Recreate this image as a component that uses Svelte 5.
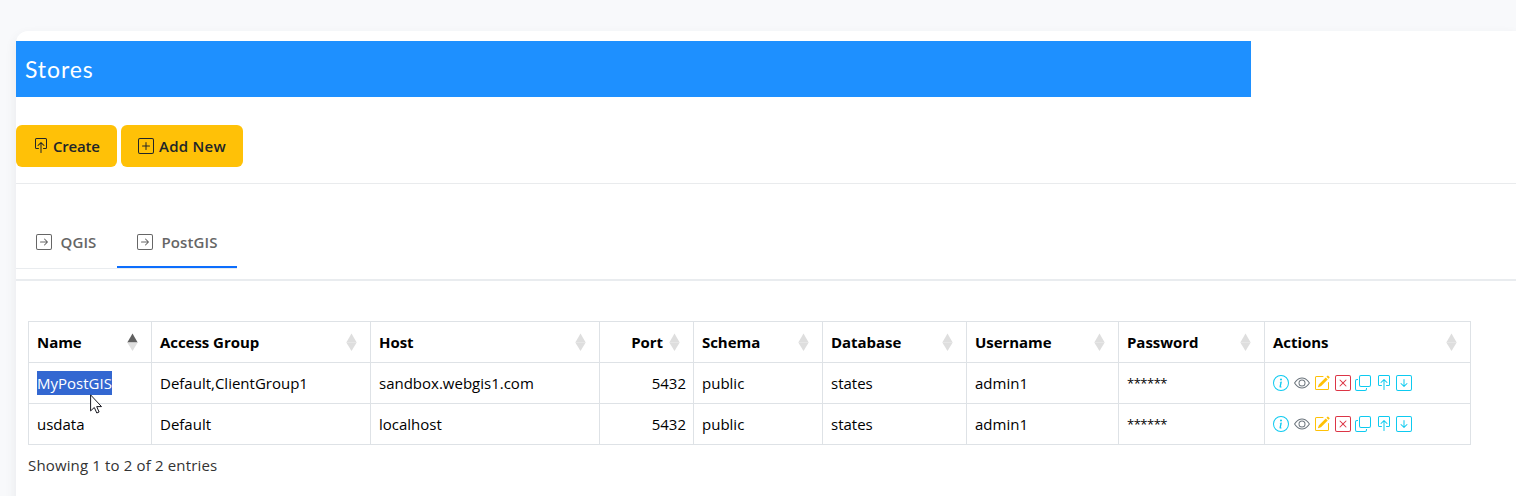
<script>
  const icons = {
    upload: [
      'M3.5 10a.5.5 0 0 1-.5-.5v-8a.5.5 0 0 1 .5-.5h9a.5.5 0 0 1 .5.5v8a.5.5 0 0 1-.5.5h-2a.5.5 0 0 0 0 1h2A1.5 1.5 0 0 0 14 9.5v-8A1.5 1.5 0 0 0 12.5 0h-9A1.5 1.5 0 0 0 2 1.5v8A1.5 1.5 0 0 0 3.5 11h2a.5.5 0 0 0 0-1z',
      'M7.646 4.146a.5.5 0 0 1 .708 0l3 3a.5.5 0 0 1-.708.708L8.5 5.707V14.5a.5.5 0 0 1-1 0V5.707L5.354 7.854a.5.5 0 1 1-.708-.708z'
    ],
    plus: [
      'M14 1a1 1 0 0 1 1 1v12a1 1 0 0 1-1 1H2a1 1 0 0 1-1-1V2a1 1 0 0 1 1-1zM2 0a2 2 0 0 0-2 2v12a2 2 0 0 0 2 2h12a2 2 0 0 0 2-2V2a2 2 0 0 0-2-2z',
      'M8 4a.5.5 0 0 1 .5.5v3h3a.5.5 0 0 1 0 1h-3v3a.5.5 0 0 1-1 0v-3h-3a.5.5 0 0 1 0-1h3v-3A.5.5 0 0 1 8 4'
    ],
    right: [
      'M15 2a1 1 0 0 0-1-1H2a1 1 0 0 0-1 1v12a1 1 0 0 0 1 1h12a1 1 0 0 0 1-1zM0 2a2 2 0 0 1 2-2h12a2 2 0 0 1 2 2v12a2 2 0 0 1-2 2H2a2 2 0 0 1-2-2zm4.5 5.5a.5.5 0 0 0 0 1h5.793l-2.147 2.146a.5.5 0 0 0 .708.708l3-3a.5.5 0 0 0 0-.708l-3-3a.5.5 0 1 0-.708.708L10.293 7.5z'
    ],
    info: [
      'M8 15A7 7 0 1 1 8 1a7 7 0 0 1 0 14m0 1A8 8 0 1 0 8 0a8 8 0 0 0 0 16',
      'm8.93 6.588-2.29.287-.082.38.45.083c.294.07.352.176.288.469l-.738 3.468c-.194.897.105 1.319.808 1.319.545 0 1.178-.252 1.465-.598l.088-.416c-.2.176-.492.246-.686.246-.275 0-.375-.193-.304-.533zM9 4.5a1 1 0 1 1-2 0 1 1 0 0 1 2 0'
    ],
    eye: [
      'M16 8s-3-5.5-8-5.5S0 8 0 8s3 5.5 8 5.5S16 8 16 8M1.173 8a13 13 0 0 1 1.66-2.043C4.12 4.668 5.88 3.5 8 3.5s3.879 1.168 5.168 2.457A13 13 0 0 1 14.828 8q-.086.13-.195.288c-.335.48-.83 1.12-1.465 1.755C11.879 11.332 10.119 12.5 8 12.5s-3.879-1.168-5.168-2.457A13 13 0 0 1 1.172 8z',
      'M8 5.5a2.5 2.5 0 1 0 0 5 2.5 2.5 0 0 0 0-5M4.5 8a3.5 3.5 0 1 1 7 0 3.5 3.5 0 0 1-7 0'
    ],
    edit: [
      'M15.502 1.94a.5.5 0 0 1 0 .706L14.459 3.69l-2-2L13.502.646a.5.5 0 0 1 .707 0l1.293 1.293zm-1.75 2.456-2-2L4.939 9.21a.5.5 0 0 0-.121.196l-.805 2.414a.25.25 0 0 0 .316.316l2.414-.805a.5.5 0 0 0 .196-.12l6.813-6.814z',
      'M1 13.5A1.5 1.5 0 0 0 2.5 15h11a1.5 1.5 0 0 0 1.5-1.5v-6a.5.5 0 0 0-1 0v6a.5.5 0 0 1-.5.5h-11a.5.5 0 0 1-.5-.5v-11a.5.5 0 0 1 .5-.5H9a.5.5 0 0 0 0-1H2.5A1.5 1.5 0 0 0 1 2.5z'
    ],
    remove: [
      'M14 1a1 1 0 0 1 1 1v12a1 1 0 0 1-1 1H2a1 1 0 0 1-1-1V2a1 1 0 0 1 1-1zM2 0a2 2 0 0 0-2 2v12a2 2 0 0 0 2 2h12a2 2 0 0 0 2-2V2a2 2 0 0 0-2-2z',
      'M4.646 4.646a.5.5 0 0 1 .708 0L8 7.293l2.646-2.647a.5.5 0 0 1 .708.708L8.707 8l2.647 2.646a.5.5 0 0 1-.708.708L8 8.707l-2.646 2.647a.5.5 0 0 1-.708-.708L7.293 8 4.646 5.354a.5.5 0 0 1 0-.708'
    ],
    copy: [
      'M4 2a2 2 0 0 1 2-2h8a2 2 0 0 1 2 2v8a2 2 0 0 1-2 2H6a2 2 0 0 1-2-2zm2-1a1 1 0 0 0-1 1v8a1 1 0 0 0 1 1h8a1 1 0 0 0 1-1V2a1 1 0 0 0-1-1zM2 5a1 1 0 0 0-1 1v8a1 1 0 0 0 1 1h8a1 1 0 0 0 1-1v-1h1v1a2 2 0 0 1-2 2H2a2 2 0 0 1-2-2V6a2 2 0 0 1 2-2h1v1z'
    ],
    down: [
      'M15 2a1 1 0 0 0-1-1H2a1 1 0 0 0-1 1v12a1 1 0 0 0 1 1h12a1 1 0 0 0 1-1zM0 2a2 2 0 0 1 2-2h12a2 2 0 0 1 2 2v12a2 2 0 0 1-2 2H2a2 2 0 0 1-2-2zm8.5 2.5a.5.5 0 0 0-1 0v5.793L5.354 8.146a.5.5 0 1 0-.708.708l3 3a.5.5 0 0 0 .708 0l3-3a.5.5 0 0 0-.708-.708L8.5 10.293z'
    ]
  };

  const columns = [
    { label: 'Name', width: 123, sorted: true },
    { label: 'Access Group', width: 219 },
    { label: 'Host', width: 229 },
    { label: 'Port', width: 94, numeric: true },
    { label: 'Schema', width: 129 },
    { label: 'Database', width: 144 },
    { label: 'Username', width: 152 },
    { label: 'Password', width: 146 },
    { label: 'Actions', width: 206 }
  ];

  const rows = [
    { cells: ['MyPostGIS', 'Default,ClientGroup1', 'sandbox.webgis1.com', '5432', 'public', 'states', 'admin1', '******'], selected: true },
    { cells: ['usdata', 'Default', 'localhost', '5432', 'public', 'states', 'admin1', '******'] }
  ];

  const actions = [
    ['info', 'cyan'],
    ['eye', 'gray'],
    ['edit', 'amber'],
    ['remove', 'red'],
    ['copy', 'cyan'],
    ['upload', 'cyan'],
    ['down', 'cyan']
  ];
</script>

{#snippet icon(name, tone = '')}
  <svg class="icon {tone}" viewBox="0 0 16 16" aria-hidden="true">
    {#each icons[name] as d}<path {d} />{/each}
  </svg>
{/snippet}

<main class="card">
  <header class="banner"><h1>Stores</h1></header>

  <div class="toolbar">
    <button class="btn">{@render icon('upload')}<span>Create</span></button>
    <button class="btn add">{@render icon('plus')}<span>Add New</span></button>
  </div>

  <div class="tabwrap">
    <nav class="tabs">
      <a class="tab" href="#qgis">{@render icon('right')}<span>QGIS</span></a>
      <a class="tab active" href="#postgis">{@render icon('right')}<span>PostGIS</span></a>
    </nav>
  </div>

  <section class="stores">
    <table>
      <colgroup>
        {#each columns as c}<col style="width:{c.width}px" />{/each}
      </colgroup>
      <thead>
        <tr>
          {#each columns as c}
            <th class:numeric={c.numeric}>
              <div class="head">
                <span>{c.label}</span>
                <svg class="sort" class:sorted={c.sorted} viewBox="0 0 11 18" aria-hidden="true">
                  <path class="up" d="M5.5 .5 10.7 9.5H.3z" />
                  <path class="dn" d="M.3 9.5h10.4L5.5 18z" />
                </svg>
              </div>
            </th>
          {/each}
        </tr>
      </thead>
      <tbody>
        {#each rows as r}
          <tr>
            {#each r.cells as cell, i}
              <td class:numeric={columns[i].numeric} class:stars={i === 7}>
                {#if r.selected && i === 0}
                  <span class="selection">{cell}<svg class="pointer" viewBox="0 0 12 20" aria-hidden="true"><path d="M.6 .9v16l3.7-3.4 2.5 5.5 2.3-1-2.4-5.4h4.8z" /></svg></span>
                {:else}<span>{cell}</span>{/if}
              </td>
            {/each}
            <td><div class="actions">{#each actions as [name, tone]}{@render icon(name, tone)}{/each}</div></td>
          </tr>
        {/each}
      </tbody>
    </table>
    <p class="summary">Showing 1 to 2 of 2 entries</p>
  </section>
</main>

<style>
  :global(html) { overflow: hidden; }
  :global(body) {
    margin: 0;
    background: #f8f9fb;
    font-family: 'Open Sans', 'Noto Sans', sans-serif;
    font-size: 15px;
    color: #000;
    overflow: hidden;
  }
  .card {
    box-sizing: border-box;
    margin: 31px 0 0 16px;
    height: 480px;
    padding-top: 10px;
    background: #fff;
    border-top-left-radius: 12px;
    box-shadow: 0 5px 12px rgba(60, 70, 80, 0.09);
  }
  .banner {
    width: 1235px;
    height: 56px;
    display: flex;
    align-items: center;
    background: #1e90ff;
  }
  h1 {
    margin: 0 0 1px 9px;
    font: 400 23px/28px Lato, sans-serif;
    letter-spacing: 0.9px;
    color: #fff;
  }
  .toolbar {
    display: flex;
    gap: 4px;
    padding: 28px 0 16px;
    border-bottom: 1px solid #e9ebed;
  }
  .btn {
    box-sizing: border-box;
    width: 101px;
    height: 42px;
    padding: 0 0 0 17px;
    display: flex;
    align-items: center;
    gap: 4px;
    border: 0;
    border-radius: 6px;
    background: #ffc107;
    color: #212529;
    font: 600 15px/24px 'Open Sans', sans-serif;
    letter-spacing: -0.2px;
    white-space: nowrap;
  }
  .add {
    width: 122px;
    gap: 5px;
    letter-spacing: 0.25px;
  }
  .icon {
    width: 16px;
    height: 16px;
    flex: none;
    fill: currentColor;
  }
  .tabwrap {
    padding: 33px 0 10px;
    border-bottom: 2px solid #e9ecef;
  }
  .tabs {
    display: flex;
    width: 221px;
    height: 51px;
    border-bottom: 1px solid #e9ecef;
  }
  .tab {
    box-sizing: border-box;
    width: 101px;
    padding: 0 0 1px 20px;
    display: flex;
    align-items: center;
    gap: 8.5px;
    color: #666;
    font-weight: 600;
    letter-spacing: 0.1px;
    text-decoration: none;
    white-space: nowrap;
  }
  .active {
    width: 120px;
    padding-bottom: 0;
    border-bottom: 2px solid #0d6efd;
  }
  .stores { padding: 40px 0 0 12px; }
  table {
    width: 1443px;
    table-layout: fixed;
    border-collapse: separate;
    border-spacing: 0;
    border: solid #dee2e6;
    border-width: 1px 0 0 1px;
  }
  th, td {
    box-sizing: border-box;
    height: 41px;
    padding: 0 7px 0 8px;
    border: solid #dee2e6;
    border-width: 0 1px 1px 0;
    text-align: left;
    line-height: 24px;
    white-space: nowrap;
  }
  th {
    padding-right: 13px;
    font-weight: 700;
    letter-spacing: -0.05px;
  }
  .head {
    display: flex;
    align-items: center;
    justify-content: space-between;
  }
  .numeric { text-align: right; }
  .numeric .head { justify-content: flex-end; gap: 6px; }
  .stars {
    font-size: 13px;
    letter-spacing: -0.5px;
  }
  .sort {
    width: 11px;
    height: 18px;
    flex: none;
    fill: #dedede;
  }
  .sorted .up { fill: #606060; }
  .selection {
    position: relative;
    display: inline-block;
    background: #3367d1;
    color: #fff;
  }
  .pointer {
    position: absolute;
    left: 53px;
    top: 23px;
    width: 12px;
    height: 20px;
    fill: #fff;
    stroke: #181820;
    stroke-width: 1;
  }
  .actions {
    display: flex;
    align-items: center;
    gap: 4.5px;
  }
  .cyan { color: #0dcaf0; }
  .gray { color: #6c757d; }
  .amber { color: #ffc107; }
  .red { color: #dc3545; }
  .summary {
    margin: 8px 0 0;
    line-height: 24px;
    letter-spacing: 0.15px;
    color: #333;
  }
</style>
